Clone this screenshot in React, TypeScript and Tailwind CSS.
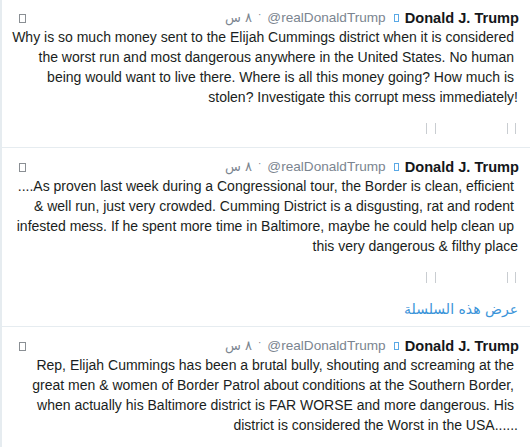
const tweets = [
  {
    lines: [
      'Why is so much money sent to the Elijah Cummings district when it is considered',
      'the worst run and most dangerous anywhere in the United States. No human',
      'being would want to live there. Where is all this money going? How much is',
      'stolen? Investigate this corrupt mess immediately!',
    ],
    actions: true,
    thread: false,
  },
  {
    lines: [
      '....As proven last week during a Congressional tour, the Border is clean, efficient',
      '& well run, just very crowded. Cumming District is a disgusting, rat and rodent',
      'infested mess. If he spent more time in Baltimore, maybe he could help clean up',
      'this very dangerous & filthy place',
    ],
    actions: true,
    thread: true,
  },
  {
    lines: [
      'Rep, Elijah Cummings has been a brutal bully, shouting and screaming at the',
      'great men & women of Border Patrol about conditions at the Southern Border,',
      'when actually his Baltimore district is FAR WORSE and more dangerous. His',
      'district is considered the Worst in the USA......',
    ],
    actions: false,
    thread: false,
  },
];

function Header() {
  return (
    <div className="flex h-[18px] items-center justify-between pl-[17px] pr-[11px]">
      <span className="h-[9px] w-[7px] border border-[#8a8f94]" />
      <div dir="rtl" className="flex items-center leading-[18px]">
        <span dir="ltr" className="text-[14.6px] font-bold text-[#14171a]">Donald J. Trump</span>
        <span className="ml-[8px] mr-[6px] h-[8px] w-[5px] border border-[#5aa9e6]" />
        <span dir="ltr" className="text-[13.6px] text-[#7b8590]">@realDonaldTrump</span>
        <span className="mx-[6px] -translate-y-[3px] text-[10px] text-[#7b8590]">·</span>
        <span className="font-['DejaVu_Sans',sans-serif] text-[13px] text-[#7b8590]">٨ س</span>
      </div>
    </div>
  );
}

function Actions() {
  return (
    <div className="mt-4 flex justify-end gap-[71px] pr-[14px]">
      <span className="h-[11px] w-[10px] border-x border-[#c9cdd1]" />
      <span className="h-[11px] w-[9px] border-x border-[#c9cdd1]" />
    </div>
  );
}

export default function App() {
  return (
    <div className="h-[447px] w-[530px] overflow-hidden border-l-2 border-[#e6ecf0] bg-white font-['Liberation_Sans',Arial,sans-serif] text-[14px]">
      {tweets.map((t, i) => (
        <div
          key={i}
          className={`${i === 0 ? 'pt-[9px] pb-[13px]' : 'pt-[10px]'} ${i === 1 ? 'pb-[7px]' : ''} ${i < 2 ? 'border-b border-[#e6ecf0]' : ''}`}
        >
          <Header />
          <div className="pr-[12px] text-right leading-5 text-[#1a1e21]">
            {t.lines.map((l, j) => (
              <div key={j} className={`whitespace-nowrap ${j < t.lines.length - 1 ? 'pr-1' : ''}`}>
                {l}
              </div>
            ))}
          </div>
          {t.actions && <Actions />}
          {t.thread && (
            <div
              dir="rtl"
              className="mt-4 pr-[12px] font-['DejaVu_Sans',sans-serif] text-[14px] leading-5 text-[#3b94d9]"
            >
              عرض هذه السلسلة
            </div>
          )}
        </div>
      ))}
    </div>
  );
}
